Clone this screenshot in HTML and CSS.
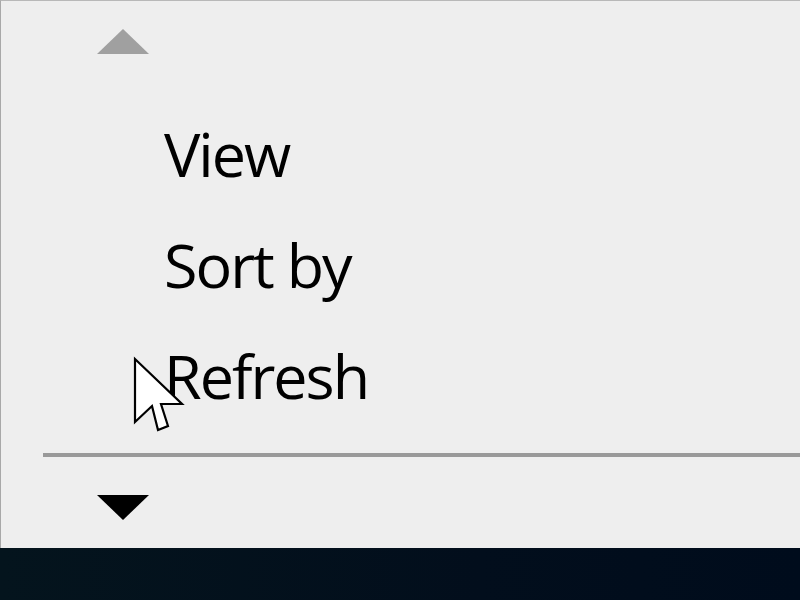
FILE: index.html
```html
<!DOCTYPE html>
<html>
<head>
<meta charset="utf-8">
<link rel="stylesheet" href="styles.css">
</head>
<body>
<div class="menu">
  <div class="scroll-up">
    <svg width="52" height="26" viewBox="0 0 52 26"><polygon points="0,25 26,0 52,25" fill="#a0a0a0"/></svg>
  </div>
  <div class="items">
    <div class="item">View</div>
    <div class="item">Sort by</div>
    <div class="item">Refresh</div>
  </div>
  <div class="separator"></div>
  <div class="scroll-down">
    <svg width="52" height="26" viewBox="0 0 52 26"><polygon points="0,0 52,0 26,25" fill="#000"/></svg>
  </div>
</div>
<div class="taskbar"></div>
<svg class="cursor" width="60" height="80" viewBox="0 0 60 80"><polygon points="3,3 3,66 20,50 26,74 36,70 29,48 50,48" fill="#fff" stroke="#000" stroke-width="2.2" stroke-linejoin="miter"/></svg>
</body>
</html>
```
FILE: styles.css
```css
html, body {
  margin: 0;
  padding: 0;
  width: 800px;
  height: 600px;
  overflow: hidden;
  background: #04121c;
}
.menu {
  box-sizing: border-box;
  height: 548px;
  background: #eeeeee;
  border-left: 1px solid #a8a8a8;
  border-top: 1px solid #b8b8b8;
  display: flex;
  flex-direction: column;
}
.scroll-up {
  padding-top: 28px;
  padding-left: 96px;
  height: 26px;
}
.scroll-up svg, .scroll-down svg {
  display: block;
}
.items {
  margin-top: 43px;
  padding-left: 163px;
  display: flex;
  flex-direction: column;
}
.item {
  font-family: "Open Sans", "Noto Sans", sans-serif;
  font-size: 61px;
  line-height: 111px;
  height: 111px;
  color: #000;
  letter-spacing: -2px;
}
.separator {
  margin-top: 22px;
  margin-left: 42px;
  height: 4px;
  background: #999999;
}
.scroll-down {
  margin-top: 38px;
  padding-left: 96px;
}
.taskbar {
  height: 52px;
  background: linear-gradient(90deg, #04141d, #020e1c 60%, #000c1c);
}
.cursor {
  position: absolute;
  left: 132px;
  top: 356px;
}
```
